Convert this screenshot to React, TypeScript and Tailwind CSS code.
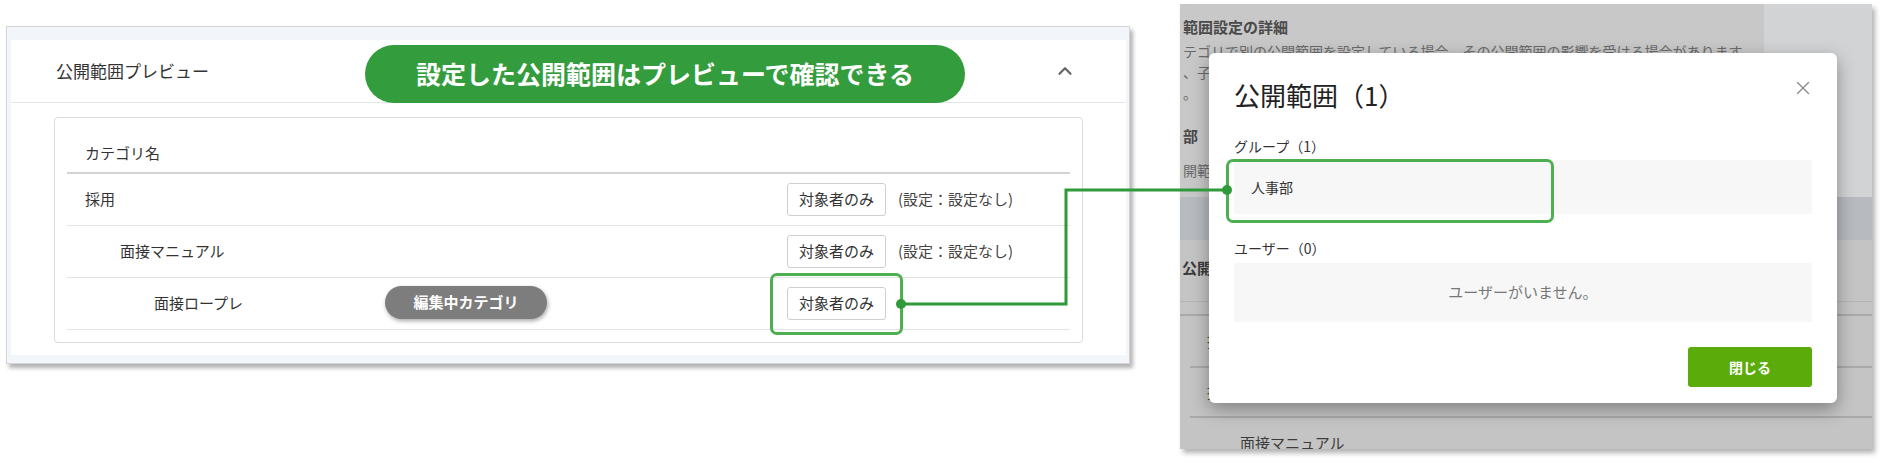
import { ChevronUp, X } from "lucide-react";

const rows = [
  { name: "採用", indent: "pl-[18px]", note: true },
  { name: "面接マニュアル", indent: "pl-[53px]", note: true },
  { name: "面接ロープレ", indent: "pl-[87px]", note: false },
];

function TargetButton() {
  return (
    <span className="flex h-[33px] w-[99px] items-center justify-center rounded-[3px] border border-[#cfcfcf] bg-white text-[15px] text-[#333]">
      対象者のみ
    </span>
  );
}

function PreviewPanel() {
  return (
    <section className="ml-[6px] mt-[26px] h-[338px] w-[1124px] border border-[#d4d4d4] bg-[#f2f5f9] pb-[8px] pl-[4px] pr-[3px] pt-[13px] shadow-[3px_4px_4px_rgba(0,0,0,0.3)]">
      <div className="flex h-full flex-col bg-white">
        <div className="flex h-[63px] shrink-0 items-center border-b border-[#e6e6e6] pl-[45px] pr-[50px]">
          <h2 className="flex-1 text-[17px] text-[#333]">公開範囲プレビュー</h2>
          <ChevronUp className="h-[22px] w-[22px] text-[#666]" strokeWidth={2.5} />
        </div>
        <div className="mx-[43px] mt-[14px] rounded-[4px] border border-[#dcdcdc] px-[12px] pb-[12px]">
          <div className="flex h-[56px] items-center border-b-2 border-[#d2d2d2] pl-[18px] pt-[16px] text-[15px] text-[#333]">
            カテゴリ名
          </div>
          {rows.map((r) => (
            <div
              key={r.name}
              className="flex h-[52px] items-center border-b border-[#e3e3e3] text-[15px] text-[#333]"
            >
              <span className={`flex-1 ${r.indent}`}>{r.name}</span>
              <div className="flex w-[283px] items-center gap-[12px]">
                <TargetButton />
                {r.note && <span className="text-[15px] text-[#444]">(設定：設定なし)</span>}
              </div>
            </div>
          ))}
        </div>
      </div>
    </section>
  );
}

function Modal() {
  return (
    <div className="absolute left-[29px] top-[49px] flex h-[350px] w-[628px] flex-col rounded-[6px] bg-white px-[25px] pb-[16px] pt-[24px] shadow-[0_6px_18px_rgba(0,0,0,0.35)]">
      <h3 className="text-[26px] leading-[36px] text-[#222]">公開範囲（1）</h3>
      <X className="absolute right-[23px] top-[24px] h-[22px] w-[22px] text-[#8a8a8a]" strokeWidth={1.5} />
      <div className="mt-[23px] text-[14px] leading-[20px] text-[#333]">グループ（1）</div>
      <div className="mt-[4px] flex h-[54px] items-center bg-[#f7f7f7] pl-[17px] text-[14px] text-[#333]">
        人事部
      </div>
      <div className="mt-[24px] text-[14px] leading-[20px] text-[#333]">ユーザー（0）</div>
      <div className="mt-[5px] flex h-[59px] items-center justify-center bg-[#f7f7f7] text-[15px] text-[#777]">
        ユーザーがいません。
      </div>
      <button className="mt-[25px] h-[40px] w-[124px] self-end rounded-[3px] bg-[#5bab0a] text-[14px] font-bold text-white">
        閉じる
      </button>
    </div>
  );
}

function DimmedPage() {
  return (
    <section className="relative ml-[50px] mt-[4px] flex h-[445px] w-[692px] flex-col overflow-hidden bg-[#c4c4c4] shadow-[3px_4px_5px_rgba(0,0,0,0.3)]">
      <div className="flex h-[193px] shrink-0">
        <div className="flex-1 overflow-hidden whitespace-nowrap bg-[#c8c8c8] pl-[3px] pt-[13px] text-[#4a4a4a]">
          <div className="text-[15px] font-bold leading-[20px]">範囲設定の詳細</div>
          <div className="mt-[4px] text-[14px] leading-[21px] text-[#6a6a6a]">
            <div>テゴリで別の公開範囲を設定している場合、その公開範囲の影響を受ける場合があります</div>
            <div>、子カテゴリにも同じ公開範囲が適用されます</div>
            <div>。</div>
          </div>
          <div className="mt-[22px] text-[15px] font-bold leading-[20px]">部</div>
          <div className="mt-[14px] text-[14px] leading-[20px] text-[#6a6a6a]">開範囲の設定なし</div>
        </div>
        <div className="w-[108px] bg-[#d2d3d5]" />
      </div>
      <div className="h-[43px] shrink-0 bg-[#b7babe]" />
      <div className="flex shrink-0 flex-col whitespace-nowrap text-[15px] text-[#3c3c3c]">
        <div className="flex h-[62px] items-center border-b border-[#b5b5b5] pb-[4px] pl-[2px] font-bold">
          公開範囲
        </div>
        <div className="mt-[12px] border-t-2 border-[#a9a9a9]">
          <div className="ml-[10px] flex h-[52px] items-center border-b-2 border-[#a9a9a9] pl-[17px]">採用</div>
          <div className="ml-[10px] flex h-[50px] items-center border-b-2 border-[#a9a9a9] pl-[17px]">採用</div>
          <div className="flex h-[50px] items-center pl-[60px]">面接マニュアル</div>
        </div>
      </div>
      <Modal />
    </section>
  );
}

export default function App() {
  return (
    <div className="relative flex h-[463px] w-[1885px] items-start overflow-hidden bg-white font-['Noto_Sans_CJK_JP',sans-serif]">
      <PreviewPanel />
      <DimmedPage />

      {/* annotations */}
      <div className="absolute left-[365px] top-[45px] flex h-[58px] w-[600px] items-center justify-center rounded-full bg-[#339c3d] text-[25px] font-bold text-white">
        設定した公開範囲はプレビューで確認できる
      </div>
      <div className="absolute left-[385px] top-[286px] flex h-[33px] w-[162px] items-center justify-center rounded-full bg-[#7d7d7d] text-[15px] font-bold text-white shadow-[1px_2px_4px_rgba(0,0,0,0.35)]">
        編集中カテゴリ
      </div>
      <div className="absolute left-[770px] top-[273px] h-[62px] w-[133px] rounded-[7px] border-[3px] border-[#4caf50]" />
      <div className="absolute left-[1226px] top-[159px] h-[64px] w-[328px] rounded-[7px] border-[3px] border-[#4caf50]" />
      <svg className="pointer-events-none absolute left-0 top-0" width="1885" height="463">
        <polyline points="901,304 1066,304 1066,190 1227,190" fill="none" stroke="#2f9a3a" strokeWidth="3" />
        <circle cx="901" cy="304" r="5" fill="#2f9a3a" />
        <circle cx="1227" cy="190" r="5" fill="#2f9a3a" />
      </svg>
    </div>
  );
}
